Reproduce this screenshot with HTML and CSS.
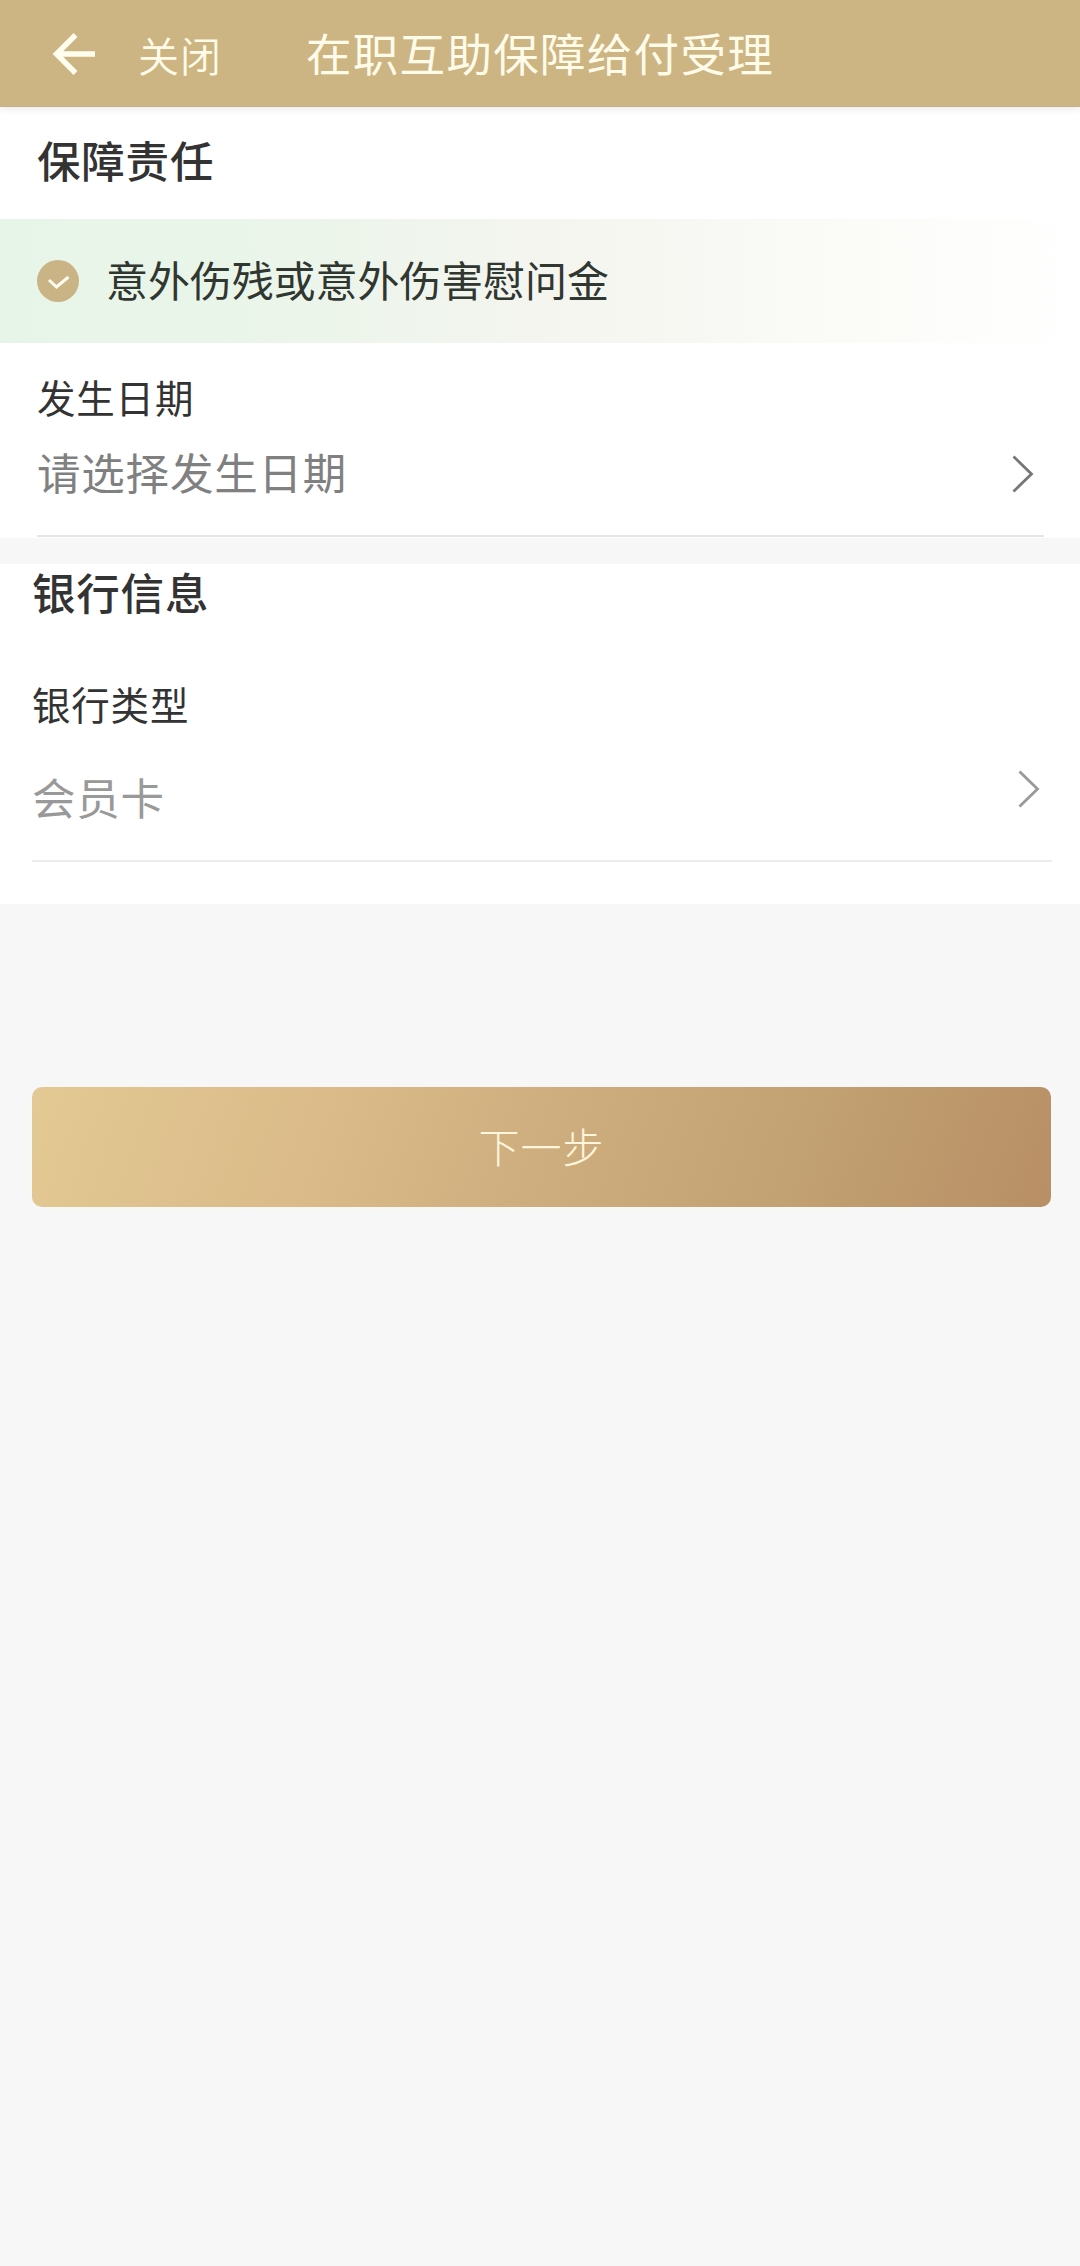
FILE: index.html
```html
<!DOCTYPE html>
<html lang="zh-CN">
<head>
<meta charset="utf-8">
<meta name="viewport" content="width=device-width">
<title>在职互助保障给付受理</title>
<link rel="stylesheet" href="styles.css">
</head>
<body>
<header class="navbar">
  <svg class="back" width="44" height="44" viewBox="0 0 44 44" aria-hidden="true"><path d="M43 22H5M23.500 3L4.500 22L23.500 41"/></svg>
  <span class="close">关闭</span>
  <h1 class="title">在职互助保障给付受理</h1>
</header>
<main>
  <section class="panel duty">
    <h2 class="heading">保障责任</h2>
    <div class="option">
      <svg class="check" width="42" height="42" viewBox="0 0 42 42" aria-hidden="true"><circle cx="21" cy="21" r="21"/><path d="M12 20L19.500 27L31.500 17"/></svg>
      <span class="option-name">意外伤残或意外伤害慰问金</span>
    </div>
    <div class="field">
      <div class="label">发生日期</div>
      <div class="picker"><span>请选择发生日期</span><svg class="chevron" width="22" height="38" viewBox="0 0 22 38" aria-hidden="true"><path d="M1.500 1.500L19.500 19L1.500 36.500"/></svg></div>
    </div>
  </section>
  <section class="panel bank">
    <h2 class="heading">银行信息</h2>
    <div class="field">
      <div class="label">银行类型</div>
      <div class="picker"><span>会员卡</span><svg class="chevron" width="22" height="38" viewBox="0 0 22 38" aria-hidden="true"><path d="M1.500 1.500L19.500 19L1.500 36.500"/></svg></div>
    </div>
  </section>
  <button class="next" type="button">下一步</button>
</main>
</body>
</html>
```
FILE: styles.css
```css
* { box-sizing: border-box; }
body {
  margin: 0;
  min-height: 2266px;
  background: #f7f7f7;
  color: #333;
  font-family: "Noto Sans CJK SC", sans-serif;
}
h1, h2 { margin: 0; font-weight: 400; }
svg { display: block; flex: none; fill: none; }
.navbar {
  display: flex;
  position: relative;
  align-items: center;
  height: 107px;
  padding: 1px 0 0 52px;
  background: #ccb583;
  border-bottom: 1px solid #c3b08b;
  box-shadow: 0 1px 8px rgba(120, 80, 80, .16);
  color: #fffbe9;
}
.back { margin-top: 1px; stroke: #fffdee; stroke-width: 5.500; }
.close {
  width: 168px;
  margin-left: 42px;
  font-size: 41px;
  font-weight: 350;
  letter-spacing: 1px;
  line-height: 60px;
}
.title {
  padding-bottom: 3px;
  font-size: 45.500px;
  letter-spacing: 1.300px;
  line-height: 60px;
}
.panel { background: #fff; }
.heading {
  font-size: 43.500px;
  font-weight: 500;
  letter-spacing: .8px;
  line-height: 60px;
}
.duty { height: 431px; }
.duty .heading { padding: 23px 0 29px 37px; }
.option {
  display: flex;
  align-items: center;
  gap: 27px;
  height: 124px;
  padding-left: 37px;
  background: linear-gradient(90deg, #e7f5e8 0%, #ebf5ea 27%, #f4f5ef 50%, #fafaf6 74%, #fff 100%);
  color: #303630;
  font-size: 42px;
  line-height: 60px;
}
.option-name { padding-bottom: 4px; letter-spacing: -.1px; }
.check circle { fill: #cab384; }
.check path { stroke: #fffdf2; stroke-width: 3; }
.field { display: flex; flex-direction: column; }
.label { font-size: 38.500px; letter-spacing: .8px; line-height: 56px; }
.picker {
  display: flex;
  justify-content: space-between;
  font-size: 43.500px;
  letter-spacing: .8px;
  line-height: 60px;
}
.chevron { stroke-width: 2.800; }
.duty .field {
  height: 194px;
  margin: 0 36px 0 37px;
  padding-top: 25px;
  border-bottom: 2px solid #e5e5e5;
}
.duty .picker { padding: 18px 10px 0 0; color: #808080; }
.duty .chevron { margin-top: 13px; stroke: #777; }
.bank { height: 340px; margin-top: 26px; }
.bank .heading { margin-top: -2px; padding-left: 32px; }
.panel.bank { display: flow-root; }
.bank .field {
  height: 240px;
  margin: 0 28px 0 32px;
  padding-top: 53px;
  border-bottom: 2px solid #ececec;
}
.bank .picker { padding: 36px 12px 0 0; color: #999; }
.bank .chevron { margin-top: 3px; stroke: #999; }
.next {
  display: block;
  width: 1019px;
  height: 120px;
  margin: 183px 0 0 32px;
  padding: 0 0 5px;
  border: 0;
  border-radius: 10px;
  background: linear-gradient(110deg, #e3c994 0%, #dabb89 28%, #cfaf7f 48%, #c4a474 70%, #bd996c 86%, #b98f65 100%);
  color: #fff6dc;
  font: 300 41px/60px "Noto Sans CJK SC", sans-serif;
  letter-spacing: 1px;
}
```
